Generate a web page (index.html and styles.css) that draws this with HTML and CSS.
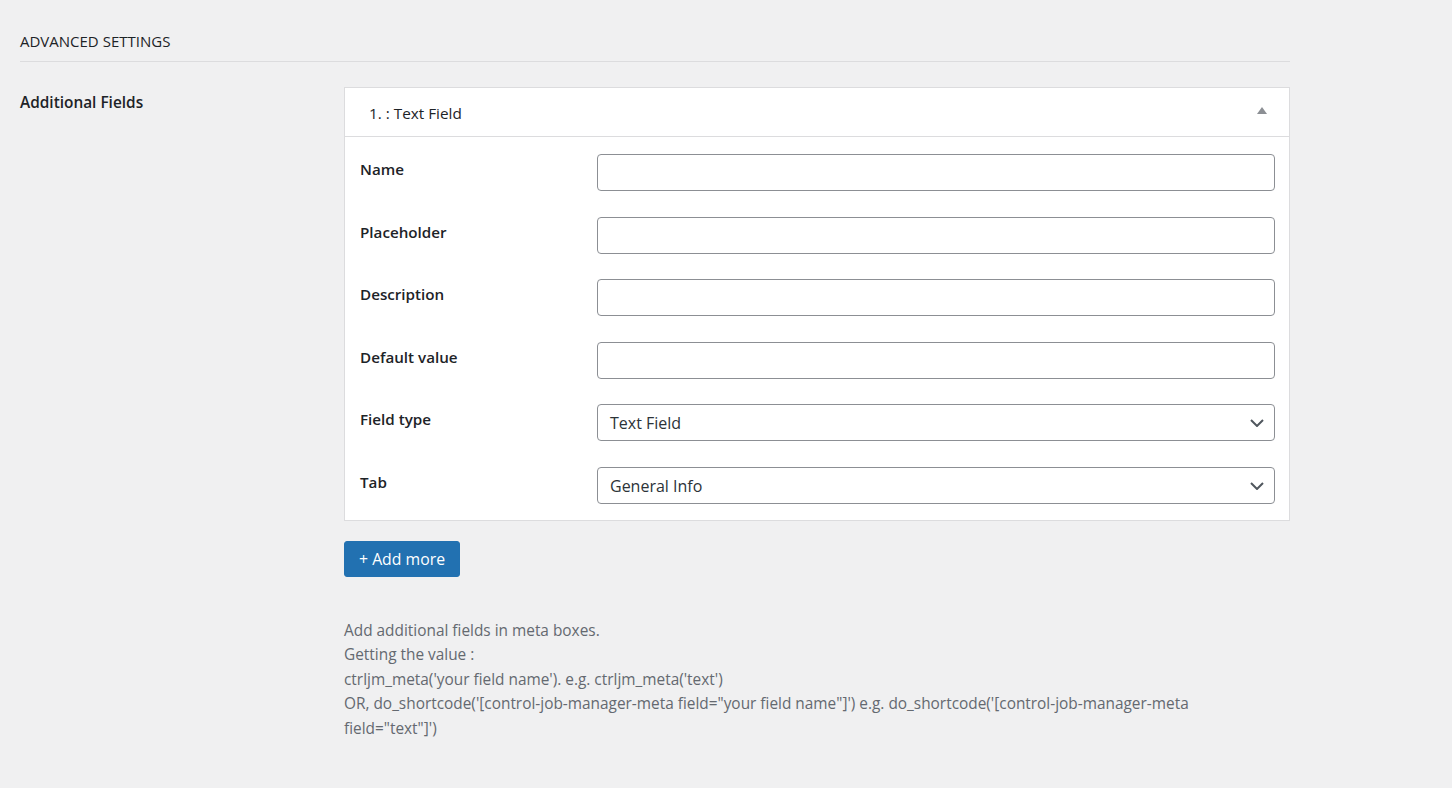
FILE: index.html
```html
<!DOCTYPE html>
<html>
<head>
<meta charset="utf-8">
<link rel="stylesheet" href="styles.css">
</head>
<body>
<div class="wrap">
  <h2 class="section-title">ADVANCED SETTINGS</h2>
  <div class="form-row">
    <div class="row-label">Additional Fields</div>
    <div class="row-field">
      <div class="field-box">
        <div class="box-header">
          <span class="box-title">1. : Text Field</span>
          <span class="toggle-arrow"></span>
        </div>
        <div class="box-body">
          <div class="inner-row">
            <label class="inner-label">Name</label>
            <input class="text-input" type="text">
          </div>
          <div class="inner-row">
            <label class="inner-label">Placeholder</label>
            <input class="text-input" type="text">
          </div>
          <div class="inner-row">
            <label class="inner-label">Description</label>
            <input class="text-input" type="text">
          </div>
          <div class="inner-row">
            <label class="inner-label">Default value</label>
            <input class="text-input" type="text">
          </div>
          <div class="inner-row">
            <label class="inner-label">Field type</label>
            <div class="select-box"><span>Text Field</span>
              <svg class="chev" width="14" height="8" viewBox="0 0 14 8"><path d="M1 1l6 6 6-6" fill="none" stroke="#50575e" stroke-width="2"/></svg>
            </div>
          </div>
          <div class="inner-row">
            <label class="inner-label">Tab</label>
            <div class="select-box"><span>General Info</span>
              <svg class="chev" width="14" height="8" viewBox="0 0 14 8"><path d="M1 1l6 6 6-6" fill="none" stroke="#50575e" stroke-width="2"/></svg>
            </div>
          </div>
        </div>
      </div>
      <button class="add-btn">+ Add more</button>
      <p class="desc">Add additional fields in meta boxes.<br>Getting the value :<br>ctrljm_meta('your field name'). e.g. ctrljm_meta('text')<br>OR, do_shortcode('[control-job-manager-meta field="your field name"]') e.g. do_shortcode('[control-job-manager-meta field="text"]')</p>
    </div>
  </div>
</div>
</body>
</html>
```
FILE: styles.css
```css
html, body {
  margin: 0;
  padding: 0;
  background: #f0f0f1;
  font-family: "Open Sans", "Noto Sans", sans-serif;
  color: #1d2327;
  font-size: 15.3px;
}
.wrap {
  width: 1270px;
  padding: 0 0 40px 20px;
}
.section-title {
  margin: 0;
  padding-top: 32px;
  padding-bottom: 10px;
  font-size: 15px;
  font-weight: 400;
  line-height: 19px;
  border-bottom: 1px solid #dcdcde;
  color: #1d2327;
}
.form-row {
  display: flex;
  padding-top: 25px;
}
.row-label {
  width: 325px;
  font-weight: 600;
  font-size: 15.4px;
  line-height: 30px;
  padding-top: 1px;
  color: #1d2327;
}
.row-field {
  width: 946px;
}
.field-box {
  background: #fff;
  border: 1px solid #dcdcde;
}
.box-header {
  height: 48px;
  border-bottom: 1px solid #dcdcde;
  display: flex;
  align-items: center;
  justify-content: space-between;
  padding: 0 22px 0 24px;
}
.box-title {
  font-size: 15.3px;
  color: #1d2327;
  padding-top: 2px;
}
.toggle-arrow {
  width: 0;
  height: 0;
  border-left: 5px solid transparent;
  border-right: 5px solid transparent;
  border-bottom: 7px solid #8c8f94;
  margin-bottom: 4px;
}
.box-body {
  padding: 17px 14px 16px 15px;
  display: flex;
  flex-direction: column;
  gap: 25.5px;
}
.inner-row {
  display: flex;
  align-items: flex-start;
}
.inner-label {
  width: 237px;
  font-weight: 600;
  font-size: 15.2px;
  line-height: 30px;
  color: #1d2327;
}
.text-input, .select-box {
  box-sizing: border-box;
  width: 678px;
  height: 37px;
  border: 1px solid #8c8f94;
  border-radius: 4px;
  background: #fff;
  margin: 0;
  padding: 0 11px;
  font-family: inherit;
  font-size: 16px;
  color: #2c3338;
}
.select-box {
  display: flex;
  align-items: center;
  justify-content: space-between;
  padding: 1px 10px 0 12px;
}
.add-btn {
  margin-top: 20px;
  background: #2271b1;
  color: #fff;
  border: 1px solid #2271b1;
  border-radius: 3px;
  height: 36px;
  padding: 0 14px;
  font-family: inherit;
  font-size: 15.8px;
}
.desc {
  margin: 42px 0 0;
  color: #646970;
  font-size: 15.4px;
  line-height: 24.5px;
  max-width: 880px;
}
```
